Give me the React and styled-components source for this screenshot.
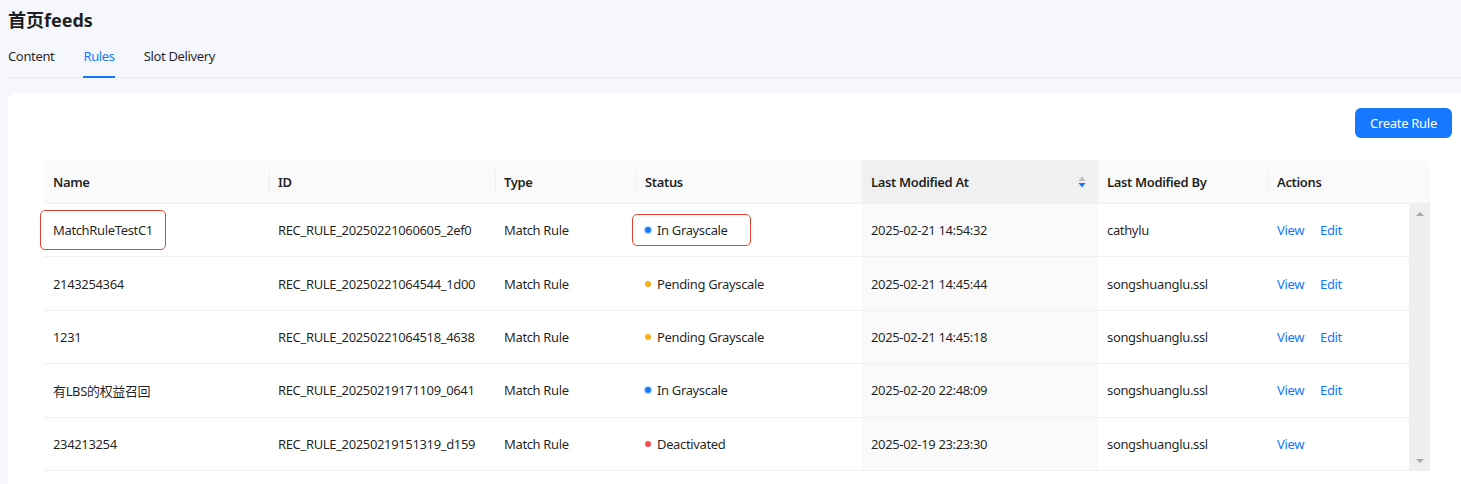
import styled, { createGlobalStyle } from 'styled-components'

const GlobalStyle = createGlobalStyle`
  body {
    margin: 0;
    background: #f5f7fc;
    font-family: "Noto Sans", "Noto Sans CJK SC", sans-serif;
    color: rgba(0, 0, 0, 0.88);
    overflow: hidden;
  }
`

const columns = [
  { key: 'name', title: 'Name', width: 225 },
  { key: 'id', title: 'ID', width: 226 },
  { key: 'type', title: 'Type', width: 141 },
  { key: 'status', title: 'Status', width: 226 },
  { key: 'modifiedAt', title: 'Last Modified At', width: 236, sorted: true },
  { key: 'modifiedBy', title: 'Last Modified By', width: 170 },
  { key: 'actions', title: 'Actions', width: 141 },
]

const gridCols = columns.map(c => `${c.width}px`).join(' ')

const statusColors = {
  'In Grayscale': '#1677ff',
  'Pending Grayscale': '#faad14',
  'Deactivated': '#ff4d4f',
}

const rows = [
  { name: 'MatchRuleTestC1', id: 'REC_RULE_20250221060605_2ef0', status: 'In Grayscale', at: '2025-02-21 14:54:32', by: 'cathylu', edit: true, marked: true },
  { name: '2143254364', id: 'REC_RULE_20250221064544_1d00', status: 'Pending Grayscale', at: '2025-02-21 14:45:44', by: 'songshuanglu.ssl', edit: true },
  { name: '1231', id: 'REC_RULE_20250221064518_4638', status: 'Pending Grayscale', at: '2025-02-21 14:45:18', by: 'songshuanglu.ssl', edit: true },
  { name: '有LBS的权益召回', id: 'REC_RULE_20250219171109_0641', status: 'In Grayscale', at: '2025-02-20 22:48:09', by: 'songshuanglu.ssl', edit: true },
  { name: '234213254', id: 'REC_RULE_20250219151319_d159', status: 'Deactivated', at: '2025-02-19 23:23:30', by: 'songshuanglu.ssl', edit: false },
]

export default function App() {
  return (
    <Page>
      <GlobalStyle />
      <Title>首页feeds</Title>
      <Tabs>
        <Tab>Content</Tab>
        <Tab active>Rules</Tab>
        <Tab>Slot Delivery</Tab>
      </Tabs>

      <Card>
        <Toolbar>
          <PrimaryButton>Create Rule</PrimaryButton>
        </Toolbar>

        <Table>
          <HeaderRow>
            {columns.map((c, i) => (
              <HeadCell key={c.key} sorted={c.sorted} divider={i > 0 && !c.sorted && columns[i - 1].sorted !== true}>
                {c.title}
                {c.sorted && (
                  <SortIcon width="8" height="12" viewBox="0 0 8 12">
                    <path d="M4 0.5 L7.5 5 L0.5 5 Z" fill="#bfbfbf" />
                    <path d="M0.5 7 L7.5 7 L4 11.5 Z" fill="#1677ff" />
                  </SortIcon>
                )}
              </HeadCell>
            ))}
            <HeadCell />
          </HeaderRow>

          <Body>
            <Rows>
              {rows.map(r => (
                <Row key={r.id}>
                  <Cell>
                    {r.marked ? <Marked pad="10px 12px">{r.name}</Marked> : r.name}
                  </Cell>
                  <Cell>{r.id}</Cell>
                  <Cell>Match Rule</Cell>
                  <Cell>
                    {r.marked ? (
                      <Marked pad="6px 22px 6px 12px">
                        <Status>
                          <Dot color={statusColors[r.status]} halo />
                          {r.status}
                        </Status>
                      </Marked>
                    ) : (
                      <Status>
                        <Dot color={statusColors[r.status]} halo={r.status === 'In Grayscale'} />
                        {r.status}
                      </Status>
                    )}
                  </Cell>
                  <Cell sorted>{r.at}</Cell>
                  <Cell>{r.by}</Cell>
                  <Cell>
                    <Actions>
                      <Link>View</Link>
                      {r.edit && <Link>Edit</Link>}
                    </Actions>
                  </Cell>
                </Row>
              ))}
            </Rows>
            <Scrollbar>
              <Arrow up />
              <Arrow />
            </Scrollbar>
          </Body>
        </Table>
      </Card>
    </Page>
  )
}

const Page = styled.div`
  padding: 8px 0 0 8px;
  height: 484px;
  box-sizing: border-box;
`

const Title = styled.h1`
  margin: 0;
  font-size: 18px;
  font-weight: 700;
  line-height: 24px;
  color: #1f1f1f;
`

const Tabs = styled.div`
  display: flex;
  gap: 29px;
  margin-top: 14px;
  border-bottom: 1px solid #e8ebf0;
`

const Tab = styled.div`
  font-size: 13px;
  letter-spacing: -0.35px;
  line-height: 20px;
  padding-bottom: 10px;
  color: ${props => props.active ? '#1677ff' : 'rgba(0, 0, 0, 0.88)'};
  border-bottom: 2px solid ${props => props.active ? '#1677ff' : 'transparent'};
  margin-bottom: -1px;
`

const Card = styled.div`
  margin-top: 15px;
  background: #fff;
  border-radius: 8px 0 0 0;
  padding: 15px 9px 0 36px;
  height: 400px;
`

const Toolbar = styled.div`
  display: flex;
  justify-content: flex-end;
  margin-bottom: 22px;
`

const PrimaryButton = styled.button`
  width: 97px;
  height: 30px;
  border: none;
  border-radius: 6px;
  background: #1677ff;
  color: #fff;
  font-family: inherit;
  font-size: 13px;
  letter-spacing: -0.3px;
  cursor: pointer;
`

const Table = styled.div`
  width: 1386px;
  font-size: 13px;
  letter-spacing: -0.35px;
`

const HeaderRow = styled.div`
  display: grid;
  grid-template-columns: ${gridCols} 21px;
  height: 43px;
  background: #fafafa;
  border-radius: 8px 8px 0 0;
  border-bottom: 1px solid #f0f0f0;
  overflow: hidden;
`

const HeadCell = styled.div`
  position: relative;
  display: flex;
  align-items: center;
  justify-content: space-between;
  padding: 0 9px;
  font-weight: 600;
  color: rgba(0, 0, 0, 0.88);
  background: ${props => props.sorted ? '#f0f0f0' : 'transparent'};

  &::before {
    content: '';
    display: ${props => props.divider ? 'block' : 'none'};
    position: absolute;
    left: 0;
    top: 50%;
    width: 1px;
    height: 22px;
    transform: translateY(-50%);
    background: #eeeeee;
  }
`

const SortIcon = styled.svg`
  margin-right: 3px;
`

const Body = styled.div`
  display: flex;
`

const Rows = styled.div`
  flex: 1;
`

const Row = styled.div`
  display: grid;
  grid-template-columns: ${gridCols};
  height: 53.4px;
  box-sizing: border-box;
  border-bottom: 1px solid #f0f0f0;
`

const Cell = styled.div`
  display: flex;
  align-items: center;
  padding: 0 9px;
  white-space: nowrap;
  background: ${props => props.sorted ? '#fafafa' : 'transparent'};
`

const Marked = styled.span`
  display: inline-flex;
  align-items: center;
  padding: ${props => props.pad};
  margin-left: -13px;
  border: 1.5px solid #e5432e;
  border-radius: 5px;
`

const Status = styled.span`
  display: inline-flex;
  align-items: center;
  gap: 6px;
`

const Dot = styled.span`
  width: 6px;
  height: 6px;
  border-radius: 50%;
  background: ${props => props.color};
  box-shadow: ${props => props.halo ? `0 0 0 1.5px ${props.color}33` : 'none'};
`

const Actions = styled.div`
  display: flex;
  gap: 16px;
`

const Link = styled.a`
  color: #1677ff;
  cursor: pointer;
`

const Scrollbar = styled.div`
  width: 21px;
  background: #efefef;
  display: flex;
  flex-direction: column;
  justify-content: space-between;
  align-items: center;
  padding: 8px 0;
  box-sizing: border-box;
  height: 267px;
`

const Arrow = styled.span`
  width: 0;
  height: 0;
  border-left: 4px solid transparent;
  border-right: 4px solid transparent;
  ${props => props.up
    ? 'border-bottom: 4px solid #a8a8a8;'
    : 'border-top: 4px solid #a8a8a8;'}
`
